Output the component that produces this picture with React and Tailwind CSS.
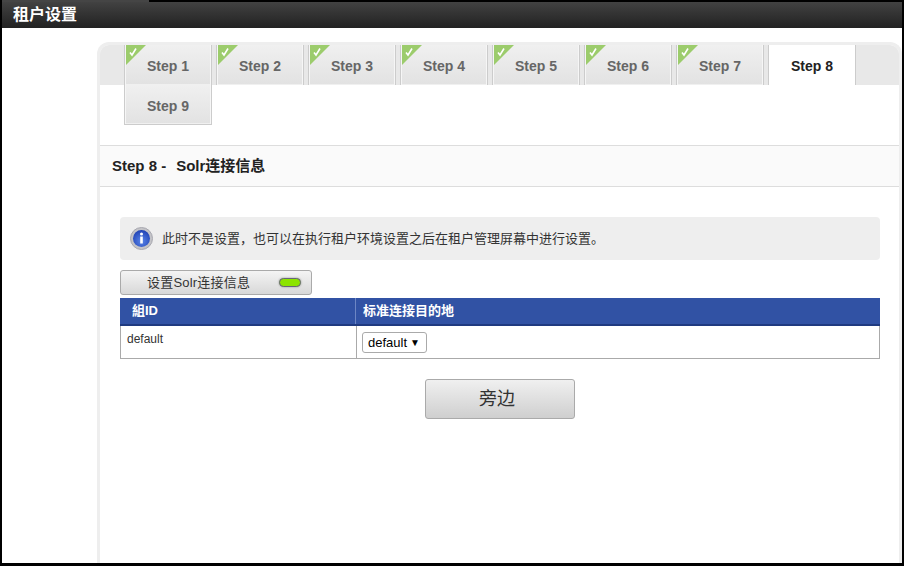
import React from 'react';

const steps = [1, 2, 3, 4, 5, 6, 7, 8, 9];
const fontStack = "font-['Liberation_Sans','Noto_Sans_CJK_SC',sans-serif]";

function StepTab({ num }) {
  const active = num === 8;
  const done = num < 8;
  return (
    <div
      className={`relative w-[88px] h-10 pt-0.5 flex items-center justify-center border-x border-[#ccc] text-sm font-bold ${
        active
          ? 'bg-white text-[#222]'
          : 'bg-gradient-to-b from-[#f0f0f0] to-[#e2e2e2] text-[#666] shadow-[inset_1px_0_0_#f6f6f6,inset_-1px_0_0_#f6f6f6,inset_0_-1px_0_#f0f0f0]'
      } ${num === 9 ? 'border-b' : ''}`}
    >
      {done && (
        <svg className="absolute left-px top-0" width="20" height="20" viewBox="0 0 20 20">
          <path d="M0 0H20L0 20Z" fill="#9ccc6c" />
          <path d="M4 7.5L6 10L10 3.5" fill="none" stroke="#fff" strokeWidth="1.6" />
        </svg>
      )}
      Step {num}
    </div>
  );
}

export default function App() {
  return (
    <div className={`relative h-[566px] w-[904px] overflow-hidden bg-black pt-0.5 pl-0.5 pr-0.5 pb-[3px] ${fontStack}`}>
      {/* Lighter title tab reaches over the frame on the left */}
      <div className="absolute left-0.5 top-0 w-[147px] h-0.5 bg-[#454545]" />
      <div className="h-full bg-white flex flex-col">
        {/* Title bar */}
        <div className="h-[26px] shrink-0 bg-gradient-to-b from-[#424242] to-[#222] pl-[11px] flex items-center text-base font-bold text-white">
          租户设置
        </div>

        <div className="flex-1 min-h-0 pl-[95px] pt-3.5">
          <div className="h-full border-l-[3px] border-t-[3px] border-r-[3px] border-[#eee] rounded-t-xl overflow-hidden">
            {/* Tabs */}
            <div className="flex flex-wrap gap-x-1 pl-6 bg-[linear-gradient(#e8e8e8,#e8e8e8)] bg-no-repeat bg-[length:100%_40px]">
              {steps.map((num) => (
                <StepTab key={num} num={num} />
              ))}
            </div>

            {/* Step heading */}
            <div className="mt-5 h-[42px] border-y border-[#ddd] bg-[#fafafa] pl-3 flex items-center text-[15px] font-bold text-[#222]">
              <span>Step 8 -</span>
              <span className="ml-2.5">Solr连接信息</span>
            </div>

            <div className="pt-[30px] pl-5 pr-[19px]">
              {/* Info message */}
              <div className="h-[43px] rounded bg-[#eee] pl-2.5 flex items-center gap-[9px] text-[13px] text-[#333]">
                <svg width="23" height="23" viewBox="0 0 23 23">
                  <defs>
                    <radialGradient id="infoBlue" cx="50%" cy="65%" r="60%">
                      <stop offset="0%" stopColor="#5a86ea" />
                      <stop offset="100%" stopColor="#2447b8" />
                    </radialGradient>
                  </defs>
                  <circle cx="11.5" cy="11.5" r="11" fill="#c4c4c8" stroke="#a8a8b0" strokeWidth="1" />
                  <circle cx="11.5" cy="11.5" r="8.5" fill="url(#infoBlue)" />
                  <circle cx="11.5" cy="7" r="1.5" fill="#fff" />
                  <rect x="10.2" y="9.5" width="2.6" height="7" fill="#fff" />
                </svg>
                此时不是设置，也可以在执行租户环境设置之后在租户管理屏幕中进行设置。
              </div>

              {/* Status button */}
              <div className="mt-[10px] w-[192px] h-[25px] rounded-[3px] border border-[#aaa] bg-gradient-to-b from-[#f4f4f4] to-[#d8d8d8] pl-[26px] pr-2.5 flex items-center justify-between text-[13px] text-[#333]">
                <span className="tracking-[0.2px]">设置Solr连接信息</span>
                <span className="w-[22px] h-[9px] rounded-full bg-[#8ce400] border border-[#667] shadow-[0_0_2px_#888]" />
              </div>

              {/* Table */}
              <div className="mt-[3px] border-x border-b border-[#aaa]">
                <div className="flex h-[28px] -mx-px bg-[#3152a4] border-b-2 border-[#1f3a80] text-[13px] font-bold text-white">
                  <div className="w-[236px] pl-3 flex items-center border-r border-[#6d86c4]">組ID</div>
                  <div className="pl-[7px] flex items-center">标准连接目的地</div>
                </div>
                <div className="flex h-[32px] text-xs text-[#333]">
                  <div className="w-[236px] pl-1.5 pt-[5px] border-r border-[#aaa]">default</div>
                  <div className="pl-[5px] pt-[6px]">
                    <div className="w-[65px] h-[21px] rounded-[3px] border border-[#aaa] bg-white pl-[5px] pr-1.5 flex items-center justify-between text-black">
                      <span className="text-[13px]">default</span>
                      <span className="text-[10px]">▼</span>
                    </div>
                  </div>
                </div>
              </div>

              {/* Next button */}
              <div className="mt-5 flex justify-center">
                <button className="w-[150px] h-10 rounded-[3px] border border-[#aaa] bg-gradient-to-b from-[#f0f0f0] to-[#cfcfcf] text-lg text-[#333] pr-1.5">
                  旁边
                </button>
              </div>
            </div>
          </div>
        </div>
      </div>
    </div>
  );
}
